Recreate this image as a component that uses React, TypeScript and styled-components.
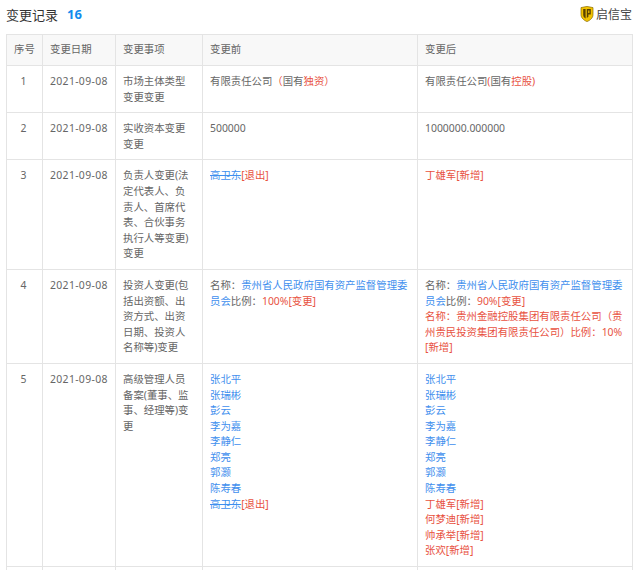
import React from 'react';
import styled, { createGlobalStyle } from 'styled-components';

const GlobalStyle = createGlobalStyle`
  html, body {
    margin: 0;
    padding: 0;
    height: 570px;
    overflow: hidden;
    background: #fff;
  }
  body {
    font-family: "Noto Sans", "Noto Sans CJK SC", sans-serif;
    font-size: 10.4px;
    color: #666;
  }
`;

const Page = styled.div`
  width: 640px;
  padding: 3px 8px 0 6px;
  box-sizing: border-box;
`;

const Header = styled.div`
  display: flex;
  align-items: center;
  justify-content: space-between;
  height: 22px;
  margin-bottom: 9px;
`;

const Title = styled.div`
  display: flex;
  align-items: center;
  gap: 9px;
  font-size: 13px;
  color: #333;
`;

const Count = styled.span`
  font-size: 13px;
  font-weight: bold;
  color: #128bed;
`;

const Brand = styled.div`
  display: flex;
  align-items: center;
  gap: 2px;
  font-size: 12px;
  color: #444;
`;

const Table = styled.table`
  width: 626px;
  table-layout: fixed;
  border-collapse: collapse;
  line-height: 15.6px;
`;

const Th = styled.th<{ $w: number; $center?: boolean }>`
  width: ${(p) => p.$w}px;
  height: 31px;
  padding: ${(p) => (p.$center ? '0' : '0 9px 0 7px')};
  box-sizing: border-box;
  border: 1px solid #e4e4e4;
  background: #f8f8f8;
  font-weight: normal;
  text-align: ${(p) => (p.$center ? 'center' : 'left')};
  color: #666;
`;

const Td = styled.td<{ $center?: boolean }>`
  padding: 8px 9px 7px 7px;
  border: 1px solid #e4e4e4;
  vertical-align: top;
  word-break: break-all;
  text-align: ${(p) => (p.$center ? 'center' : 'left')};
`;

const DateCell = styled(Td)`
  white-space: nowrap;
  word-break: normal;
  letter-spacing: 0.35px;
`;

const Link = styled.span<{ $struck?: boolean }>`
  color: #3f8fee;
  text-decoration: ${(p) => (p.$struck ? 'line-through' : 'none')};
  text-decoration-thickness: 1px;
`;

const Red = styled.span`
  color: #e8523f;
`;

const Line = styled.div``;

const BlankCell = styled.td`
  height: 3px;
  padding: 0;
  border-left: 1px solid #e4e4e4;
  border-right: 1px solid #e4e4e4;
`;

const Shield = () => (
  <svg width="14" height="16" viewBox="0 0 14 16">
    <path d="M1 1.6 L7 .4 L13 1.6 V8.6 C13 12 10 14.4 7 15.6 C4 14.4 1 12 1 8.6 Z" fill="#f2c200" stroke="#8a6d00" strokeWidth="0.7" />
    <path d="M3.2 3 H5.6 V12.6 C4.1 11.7 3.2 10.4 3.2 8.8 Z" fill="#5a4300" />
    <path d="M6.8 3 H10.8 V8.4 H8.4 V10.8 L6.8 12 Z" fill="#5a4300" />
    <path d="M8.2 4.4 H9.4 V7 H8.2 Z" fill="#f2c200" />
  </svg>
);

const names = ['张北平', '张瑞彬', '彭云', '李为嘉', '李静仁', '郑亮', '郭灏', '陈寿春'];
const added = ['丁雄军', '何梦迪', '帅承举', '张欢'];

const rows = [
  {
    date: '2021-09-08',
    item: '市场主体类型变更变更',
    before: (
      <>
        有限责任公司<Red>（</Red>国有<Red>独资）</Red>
      </>
    ),
    after: (
      <>
        有限责任公司<Red>(</Red>国有<Red>控股)</Red>
      </>
    ),
  },
  { date: '2021-09-08', item: '实收资本变更变更', before: '500000', after: '1000000.000000' },
  {
    date: '2021-09-08',
    item: '负责人变更(法定代表人、负责人、首席代表、合伙事务执行人等变更)变更',
    before: (
      <>
        <Link $struck>高卫东</Link>
        <Red>[退出]</Red>
      </>
    ),
    after: <Red>丁雄军[新增]</Red>,
  },
  {
    date: '2021-09-08',
    item: '投资人变更(包括出资额、出资方式、出资日期、投资人名称等)变更',
    before: (
      <>
        名称：<Link>贵州省人民政府国有资产监督管理委员会</Link>比例：<Red>100%[变更]</Red>
      </>
    ),
    after: (
      <>
        名称：<Link>贵州省人民政府国有资产监督管理委员会</Link>比例：<Red>90%[变更]</Red>
        <Line>
          <Red>名称：贵州金融控股集团有限责任公司（贵州贵民投资集团有限责任公司）比例：10%[新增]</Red>
        </Line>
      </>
    ),
  },
  {
    date: '2021-09-08',
    item: '高级管理人员备案(董事、监事、经理等)变更',
    before: (
      <>
        {names.map((n) => (
          <Line key={n}>
            <Link>{n}</Link>
          </Line>
        ))}
        <Line>
          <Link $struck>高卫东</Link>
          <Red>[退出]</Red>
        </Line>
      </>
    ),
    after: (
      <>
        {names.map((n) => (
          <Line key={n}>
            <Link>{n}</Link>
          </Line>
        ))}
        {added.map((n) => (
          <Line key={n}>
            <Red>{n}[新增]</Red>
          </Line>
        ))}
      </>
    ),
  },
];

export default function App() {
  return (
    <Page>
      <GlobalStyle />
      <Header>
        <Title>
          变更记录 <Count>16</Count>
        </Title>
        <Brand>
          <Shield />
          启信宝
        </Brand>
      </Header>
      <Table>
        <thead>
          <tr>
            <Th $w={36} $center>序号</Th>
            <Th $w={73}>变更日期</Th>
            <Th $w={87}>变更事项</Th>
            <Th $w={215}>变更前</Th>
            <Th $w={215}>变更后</Th>
          </tr>
        </thead>
        <tbody>
          {rows.map((r, i) => (
            <tr key={i}>
              <Td $center>{i + 1}</Td>
              <DateCell>{r.date}</DateCell>
              <Td>{r.item}</Td>
              <Td>{r.before}</Td>
              <Td>{r.after}</Td>
            </tr>
          ))}
          <tr>
            <BlankCell />
            <BlankCell />
            <BlankCell />
            <BlankCell />
            <BlankCell />
          </tr>
        </tbody>
      </Table>
    </Page>
  );
}
